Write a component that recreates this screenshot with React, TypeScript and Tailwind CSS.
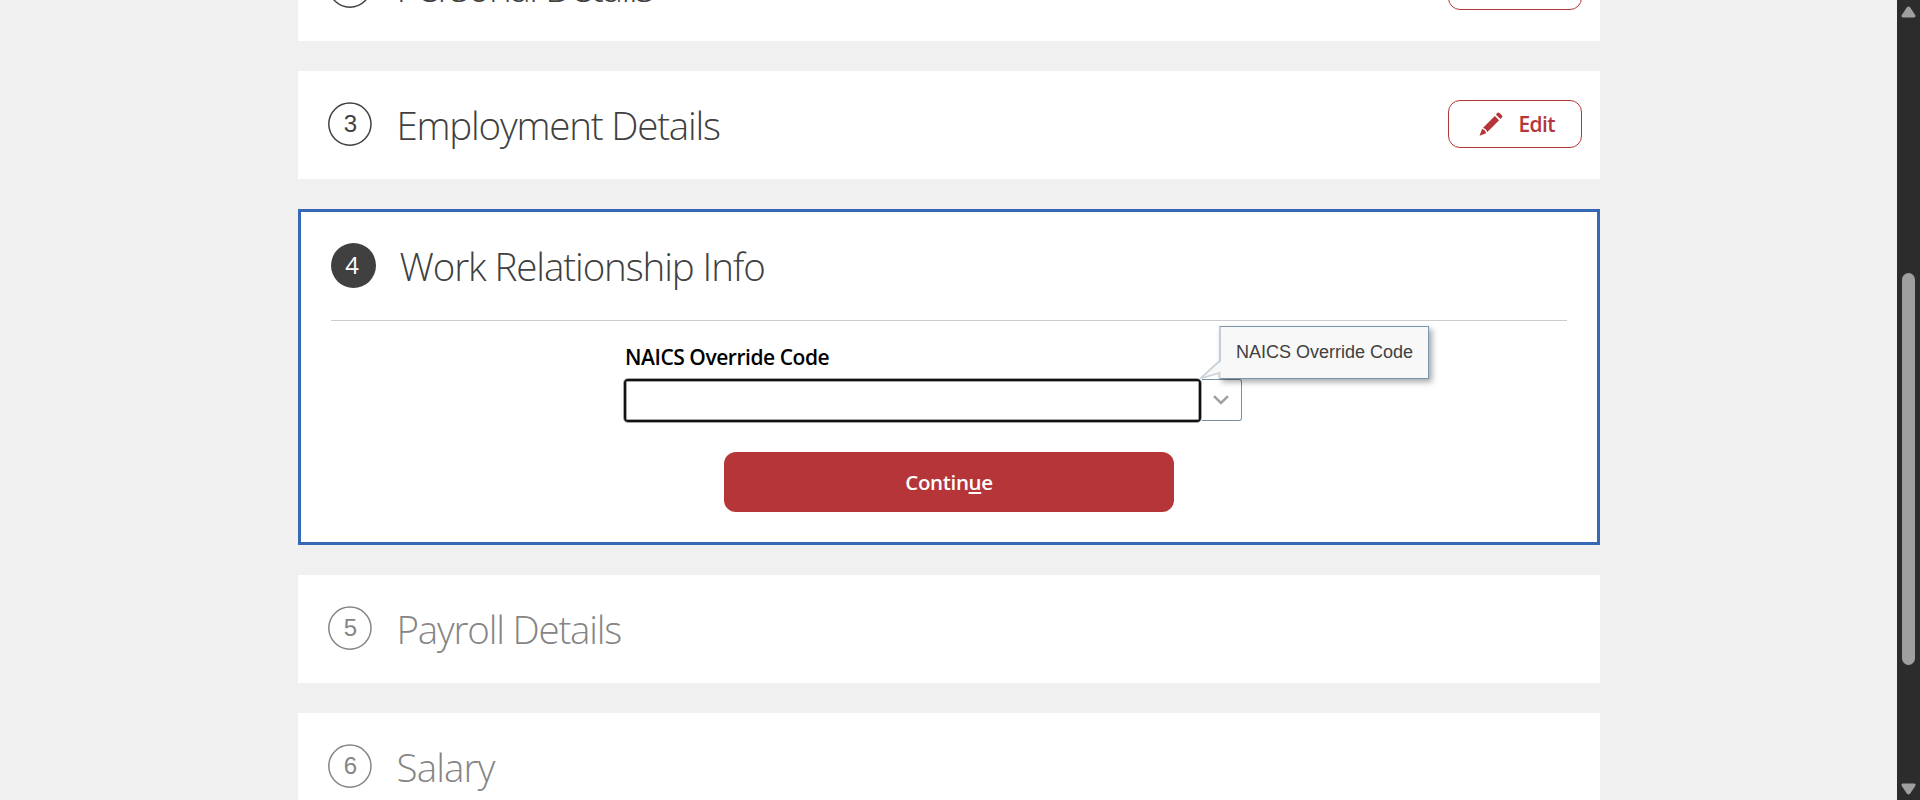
import React from "react";

type StepProps = { num: string; title: string; muted?: boolean; editable?: boolean; spacing: string };

function PencilIcon() {
  return (
    <svg width="24" height="24" viewBox="0 0 24 24" fill="#b63538" className="block">
      <path d="M18.1 1.2Q19.4-.1 20.7 1.2L22.8 3.3Q23.9 4.5 22.8 5.7L21.4 7.1 17 2.7Z" />
      <path d="M15.8 4 20.1 8.3 8.4 20Q7.5 17.3 4.1 15.7Z" />
      <path d="M3.2 16.8Q6.5 18.1 7.2 21.2L.5 23.7Z" />
    </svg>
  );
}

function StepCard({ num, title, muted, editable, spacing }: StepProps) {
  return (
    <section className="flex h-[108px] shrink-0 items-start bg-white pl-[30.5px] pr-[18px]">
      <div className="relative mt-[31px] flex size-[44px] shrink-0 items-center justify-center pb-px pl-px">
        <svg width="44" height="44" viewBox="0 0 44 44" fill="none" className="absolute left-0 top-0">
          <circle cx="21.9" cy="22.1" r="21.1" stroke={muted ? "#858585" : "#404040"} strokeWidth="1.5" />
        </svg>
        <span
          className={`font-['Liberation_Sans',sans-serif] text-[24px] leading-none ${
            muted ? "text-[#858585]" : "text-[#404040]"
          }`}
        >
          {num}
        </span>
      </div>
      <h2
        className={`ml-[24.5px] mt-[27px] grow whitespace-nowrap font-['Open_Sans',sans-serif] text-[38.5px] font-light leading-[54px] ${spacing} ${
          muted ? "text-[#858585]" : "text-[#404040]"
        }`}
      >
        {title}
      </h2>
      {editable && (
        <button className="mt-[29px] flex h-[48px] w-[134px] items-center rounded-[12px] border border-[#b63538] pl-[30px] font-['Open_Sans',sans-serif] text-[21px] font-semibold leading-none tracking-[-0.6px] text-[#b63538]">
          <PencilIcon />
          <span className="ml-[16px]">Edit</span>
        </button>
      )}
    </section>
  );
}

function ScrollBar() {
  return (
    <div className="flex h-full w-[23px] shrink-0 flex-col items-center bg-[#2c2c2c]">
      <svg width="15" height="12" viewBox="0 0 15 12" className="mt-[6px] block shrink-0" fill="#9f9f9f">
        <path d="M5.8 1.4Q7.5-.6 9.2 1.4L14.2 9Q15.3 11.5 13 11.5H2Q-.3 11.5.8 9Z" />
      </svg>
      <div className="mt-[255px] h-[392px] w-[13px] shrink-0 rounded-full bg-[#9f9f9f]" />
      <svg width="15" height="12" viewBox="0 0 15 12" className="mt-[118px] block shrink-0" fill="#9f9f9f">
        <path d="M5.8 10.6Q7.5 12.6 9.2 10.6L14.2 3Q15.3.5 13 .5H2Q-.3.5.8 3Z" />
      </svg>
    </div>
  );
}

function Tooltip() {
  return (
    <div className="absolute left-[595px] top-[-52px] flex h-[53px] w-[210px] items-center justify-center border border-l-2 border-[#7b95ad] border-l-[#c3ced8] bg-[#f8f8f8] pb-[2px] pl-px font-['Liberation_Sans',sans-serif] text-[18px] leading-none text-[#404040] shadow-[3px_3px_6px_rgba(0,0,0,0.35)]">
      <span className="whitespace-nowrap">NAICS Override Code</span>
      <svg width="24" height="21" viewBox="0 0 24 21" className="absolute left-[-22px] top-[32px]">
        <path d="M23 1.5 1.5 19.5 21 14V18H24V1Z" fill="#f8f8f8" />
        <path d="M21 1.5 1.5 19.5 20.5 14V20" fill="none" stroke="#c9d3dc" strokeWidth="1.8" />
      </svg>
    </div>
  );
}

export default function App() {
  return (
    <div className="flex h-[800px] w-full overflow-hidden bg-[#f0f0f0]">
      <main className="flex h-full grow flex-col items-center overflow-hidden">
        <div className="-mt-[67px] flex w-[1302px] flex-col gap-[30px]">
          <StepCard num="2" title="Personal Details" editable spacing="tracking-[-1.35px]" />
          <StepCard num="3" title="Employment Details" editable spacing="tracking-[-1.2px]" />

          <section className="flex h-[336px] shrink-0 flex-col items-center border-[3px] border-[#3768b5] bg-white px-[30px]">
            <header className="flex h-[109px] w-full shrink-0 items-start border-b border-[#cccccc]">
              <div className="mt-[31px] flex size-[45px] shrink-0 items-center justify-center rounded-full bg-[#404040] pb-[2px] pr-[2px] font-['Open_Sans',sans-serif] text-[24px] leading-none text-white">
                4
              </div>
              <h2 className="ml-[24px] mt-[27px] whitespace-nowrap font-['Open_Sans',sans-serif] text-[38.5px] font-light leading-[54px] tracking-[-1.1px] text-[#404040]">
                Work Relationship Info
              </h2>
            </header>
            <div className="w-[650px] pt-[23px]">
              <label className="block pl-[1.5px] font-['Open_Sans',sans-serif] text-[21px] font-semibold leading-[26px] tracking-[-0.45px] text-black">
                NAICS Override Code
              </label>
              <div className="relative mt-[8px] flex h-[45px] items-start">
                <div className="-ml-px h-[45px] w-[579px] rounded-[5px] border border-[#a6a6a6]">
                  <div className="h-full w-full rounded-[4px] border-2 border-[#111111]">
                    <input className="block h-full w-full rounded-[2px] border border-[#a6a6a6] bg-white outline-none" />
                  </div>
                </div>
                <div className="mt-px flex h-[42px] w-[40px] items-center justify-center rounded-r-[3px] border border-l-0 border-[#7b8fa3]">
                  <svg width="16" height="10" viewBox="0 0 16 10" fill="none" stroke="#a0a0a0" strokeWidth="2.5">
                    <path d="M1 1.2 8 8 15 1.2" />
                  </svg>
                </div>
                <Tooltip />
              </div>
            </div>
            <button className="mt-[29px] h-[60px] w-[450px] shrink-0 rounded-[12px] bg-[#b63538] pl-px font-['Open_Sans',sans-serif] text-[20.5px] font-semibold leading-none tracking-[-0.35px] text-white">
              Contin<span className="underline decoration-2 underline-offset-2">u</span>e
            </button>
          </section>

          <StepCard num="5" title="Payroll Details" muted spacing="tracking-[-1.2px]" />
          <StepCard num="6" title="Salary" muted spacing="tracking-[-0.85px]" />
        </div>
      </main>
      <ScrollBar />
    </div>
  );
}
